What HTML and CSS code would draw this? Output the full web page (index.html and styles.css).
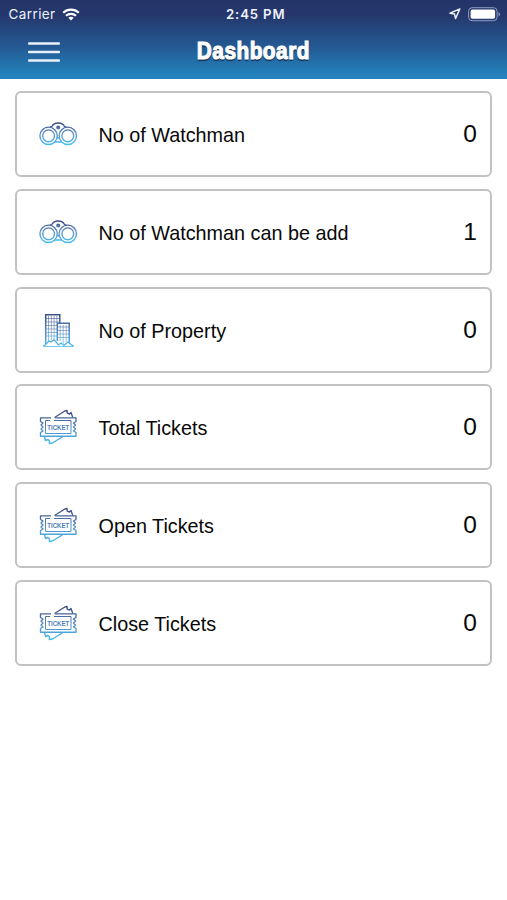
FILE: index.html
```html
<!DOCTYPE html>
<html lang="en">
<head>
<meta charset="utf-8">
<title>Dashboard</title>
<link rel="stylesheet" href="styles.css">
</head>
<body>
<svg class="defs" aria-hidden="true">
  <defs>
    <linearGradient id="ink" gradientUnits="userSpaceOnUse" x1="0" y1="3" x2="0" y2="37">
      <stop offset="0" stop-color="#3b477f"/>
      <stop offset="0.5" stop-color="#5585bd"/>
      <stop offset="1" stop-color="#45bdf0"/>
    </linearGradient>
    <linearGradient id="ink-low" gradientUnits="userSpaceOnUse" x1="0" y1="8" x2="0" y2="31">
      <stop offset="0" stop-color="#3c4580"/>
      <stop offset="0.5" stop-color="#5f90c6"/>
      <stop offset="1" stop-color="#48c0f2"/>
    </linearGradient>
    <symbol id="binoculars" viewBox="0 0 40 40">
      <g fill="none" stroke="url(#ink-low)" stroke-width="1.400">
        <circle cx="10.600" cy="21.800" r="8.700"/>
        <circle cx="10.600" cy="21.800" r="5.900"/>
        <circle cx="29.800" cy="21.800" r="8.700"/>
        <circle cx="29.800" cy="21.800" r="5.900"/>
        <path d="M12 13.200L14 12.300C16.200 7.800 24.200 7.800 26.400 12.300L28.400 13.200M16.800 28H23.600M19.200 23.800H21.200"/>
        <circle cx="20.200" cy="13.600" r="1.300" fill="#69789f"/>
      </g>
    </symbol>
    <symbol id="building" viewBox="0 0 40 40">
      <g fill="none" stroke="url(#ink)">
        <path stroke-width="1.500" d="M7.700 34V4.700H21.800V13M19.300 31V13.300H31.200V34M5 36H36"/>
        <path stroke-width="0.600" d="M10.500 6V31M13.300 6V30M16.100 6V29M18.900 6V13M8 8.500H21M8 12H21M8 15.500H19M8 19H19M8 22.500H19M8 26H19M22.200 15V31M25.200 15V34M28.200 15V32M20 17H31M20 20.500H31M20 24H31M20 27.500H31"/>
        <path stroke-width="1.200" fill="#fff" d="M6 36L11 31L13 32L16 29.500L20.500 35L23 33L26 35.500L30 32L35 36"/>
      </g>
    </symbol>
    <symbol id="ticket" viewBox="0 0 40 40">
      <g fill="none" stroke="url(#ink)" stroke-width="1.350" stroke-linejoin="round">
        <path d="M13 10.800H2.500V14.500L5 16L3 18L5 20L3 22L5 24L2.500 25.500V29.200H38V25.500L35.500 24L37.500 22L35.500 20L37.500 18L35.500 16L38 14.500V10.800H17"/>
        <path stroke-width="1" d="M12 13.500H7.500V26.500H33V13.500H16"/>
        <path d="M16.500 10.500L26.500 4.200L29 3.500L29.200 6.200L31.500 7L33 5.500L34.800 10.500M6.500 29.500L7.500 33.500L10 32.500L11.500 34L11.300 36.500L14.500 36L24.500 29.800"/>
      </g>
      <text x="9.300" y="22.700" textLength="22" lengthAdjust="spacingAndGlyphs" class="ticket-word">TICKET</text>
    </symbol>
  </defs>
</svg>
<header class="header">
  <div class="status">
    <div class="status-left">
      <span>Carrier</span>
      <svg width="18" height="13" viewBox="0 0 18 13" fill="none" stroke="#fff" stroke-width="2.200">
        <path d="M1.200 4.700C5.500 .600 12.500 .600 16.800 4.700M4 7.800C6.800 5.200 11.200 5.200 14 7.800"/>
        <path d="M6.300 9.800Q9 7.700 11.700 9.800L9 12.500Z" fill="#fff" stroke="none"/>
      </svg>
    </div>
    <span class="time">2:45 PM</span>
    <div class="status-right">
      <svg width="12" height="12" viewBox="0 0 12 12" fill="none" stroke="#e8edf8" stroke-width="1.500" stroke-linejoin="round"><path d="M10.800 .900L1 5.300L5.500 6L6.600 10.500Z"/></svg>
      <svg width="33" height="15" viewBox="0 0 33 15"><rect x=".6" y=".7" width="28.500" height="13" rx="3.500" fill="none" stroke="#8e9ac0"/><rect x="2.600" y="2.600" width="24.500" height="9.200" rx="1.800" fill="#fff"/><path d="M30.500 5V9.500Q32 8.800 32 7.250T30.500 5Z" fill="#8e9ac0"/></svg>
    </div>
  </div>
  <div class="navbar">
    <svg class="menu" viewBox="0 0 32 22"><path d="M1 2.500H31M1 11H31M1 19.500H31"/></svg>
    <h1 class="title">Dashboard</h1>
    <div></div>
  </div>
</header>
<main class="list">
  <section class="card"><svg class="icon"><use href="#binoculars"/></svg><span class="label">No of Watchman</span><span class="count">0</span></section>
  <section class="card"><svg class="icon"><use href="#binoculars"/></svg><span class="label">No of Watchman can be add</span><span class="count">1</span></section>
  <section class="card"><svg class="icon"><use href="#building"/></svg><span class="label">No of Property</span><span class="count">0</span></section>
  <section class="card"><svg class="icon"><use href="#ticket"/></svg><span class="label">Total Tickets</span><span class="count">0</span></section>
  <section class="card"><svg class="icon"><use href="#ticket"/></svg><span class="label">Open Tickets</span><span class="count">0</span></section>
  <section class="card"><svg class="icon"><use href="#ticket"/></svg><span class="label">Close Tickets</span><span class="count">0</span></section>
</main>
</body>
</html>
```
FILE: styles.css
```css
* { box-sizing: border-box; }
body {
  margin: 0;
  min-height: 900px;
  background: #fff;
  color: #080808;
  font-family: "Liberation Sans", Arial, sans-serif;
}
.defs { display: block; width: 0; height: 0; }
.header {
  height: 79px;
  background: linear-gradient(#243468 0, #25386d 20%, #245a94 60%, #2380ba 93%, #2584be 100%);
}
.status {
  display: grid;
  grid-template-columns: 1fr auto 1fr;
  align-items: center;
  height: 27px;
  padding: 0 6px 0 8.5px;
  color: #eef2fb;
  font: 13.5px/27px Inter, sans-serif;
}
.status-left, .status-right { display: flex; align-items: center; }
.status-left { gap: 6px; letter-spacing: 0.4px; }
.status-left span { padding-top: 1px; }
.status-right { justify-content: flex-end; gap: 7px; }
.time {
  font-weight: 600;
  font-size: 13.2px;
  letter-spacing: 0.85px;
  padding: 1px 0 0 2px;
}
.navbar {
  display: grid;
  grid-template-columns: 1fr auto 1fr;
  align-items: center;
  height: 48px;
  padding: 0 27.5px;
}
.menu {
  width: 32px;
  height: 22px;
  margin-top: 2px;
  stroke: #e8f1fa;
  stroke-width: 2.4;
  stroke-linecap: round;
}
.title {
  margin: 0;
  color: #fff;
  font-size: 24px;
  line-height: 30px;
  font-weight: 700;
  letter-spacing: 0.6px;
  transform: scaleX(0.865);
  -webkit-text-stroke: 1.1px #fff;
  text-shadow: 0 2px 1px #182d4b;
}
.list {
  display: flex;
  flex-direction: column;
  gap: 11.7px;
  padding: 12.2px 15px 0;
}
.card {
  display: flex;
  align-items: center;
  height: 86px;
  padding: 0 13px 0 21px;
  border: 2px solid #c2c2c2;
  border-radius: 6px;
}
.icon { flex: none; width: 40px; height: 40px; }
.label { flex: 1; margin-left: 20.5px; padding-top: 2px; font-size: 19.8px; line-height: 24px; }
.count { font-size: 24.5px; line-height: 28px; }
.ticket-word {
  font: 700 7.8px "Liberation Sans", Arial, sans-serif;
  fill: #4f7fb5;
}
```
